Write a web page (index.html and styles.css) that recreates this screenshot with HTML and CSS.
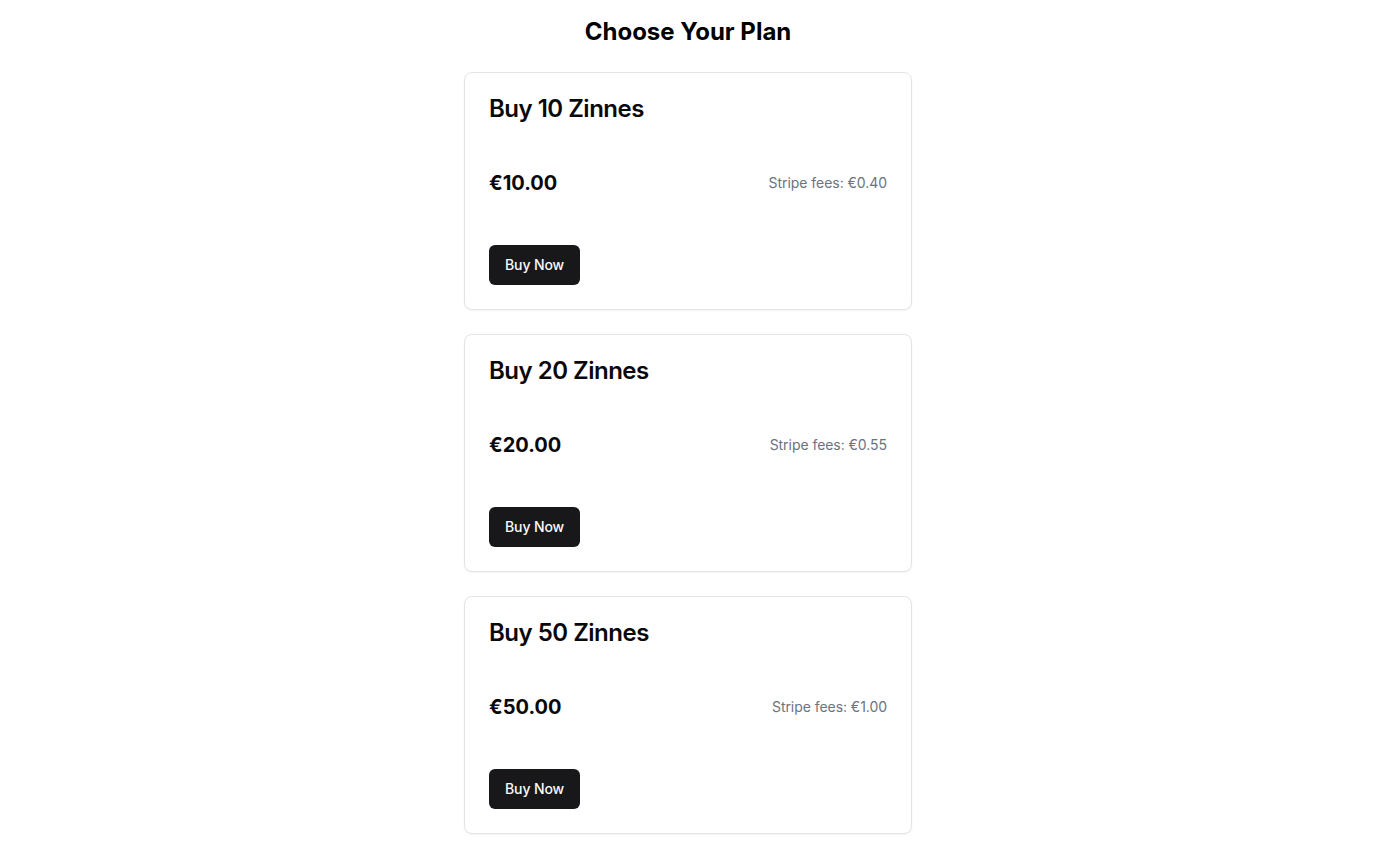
FILE: index.html
```html
<!DOCTYPE html>
<html lang="en">
<head>
<meta charset="utf-8">
<title>Choose Your Plan</title>
<link rel="stylesheet" href="styles.css">
</head>
<body>
<main class="page">
  <h1 class="page-title">Choose Your Plan</h1>
  <div class="plans">
    <section class="card">
      <div class="card-header"><h2 class="card-title">Buy 10 Zinnes</h2></div>
      <div class="card-content">
        <div class="price-row">
          <span class="price">€10.00</span>
          <span class="fees">Stripe fees: €0.40</span>
        </div>
      </div>
      <div class="card-footer"><button class="btn">Buy Now</button></div>
    </section>
    <section class="card">
      <div class="card-header"><h2 class="card-title">Buy 20 Zinnes</h2></div>
      <div class="card-content">
        <div class="price-row">
          <span class="price">€20.00</span>
          <span class="fees">Stripe fees: €0.55</span>
        </div>
      </div>
      <div class="card-footer"><button class="btn">Buy Now</button></div>
    </section>
    <section class="card">
      <div class="card-header"><h2 class="card-title">Buy 50 Zinnes</h2></div>
      <div class="card-content">
        <div class="price-row">
          <span class="price">€50.00</span>
          <span class="fees">Stripe fees: €1.00</span>
        </div>
      </div>
      <div class="card-footer"><button class="btn">Buy Now</button></div>
    </section>
  </div>
</main>
</body>
</html>
```
FILE: styles.css
```css
* { box-sizing: border-box; }
html, body { margin: 0; padding: 0; background: #ffffff; }
body {
  font-family: Inter, "Liberation Sans", sans-serif;
  color: #09090b;
}
.page {
  padding: 16px 0;
  display: flex;
  flex-direction: column;
  align-items: center;
}
.page-title {
  margin: 0 0 24px;
  font-size: 24px;
  line-height: 32px;
  font-weight: 700;
  color: #000;
}
.plans {
  width: 448px;
  display: flex;
  flex-direction: column;
  gap: 24px;
}
.card {
  border: 1px solid #e4e4e7;
  border-radius: 8px;
  background: #fff;
  box-shadow: 0 1px 2px rgba(0,0,0,0.05);
}
.card-header { padding: 24px; }
.card-title {
  margin: 0;
  font-size: 24px;
  line-height: 24px;
  font-weight: 600;
  letter-spacing: -0.5px;
}
.card-content { padding: 0 24px 24px; }
.price-row {
  display: flex;
  justify-content: space-between;
  align-items: center;
  padding: 24px 0;
  height: 76px;
}
.price {
  font-size: 20px;
  line-height: 28px;
  font-weight: 700;
}
.fees {
  font-size: 14px;
  line-height: 20px;
  color: #6b7280;
  margin-top: -1px;
  letter-spacing: -0.05px;
}
.card-footer { padding: 0 24px 24px; display: flex; }
.btn {
  font-family: Inter, "Liberation Sans", sans-serif;
  height: 40px;
  padding: 0 16px 2px;
  border: 0;
  border-radius: 6px;
  background: #18181b;
  color: #fafafa;
  font-size: 14px;
  font-weight: 500;
  letter-spacing: -0.1px;
}
```
